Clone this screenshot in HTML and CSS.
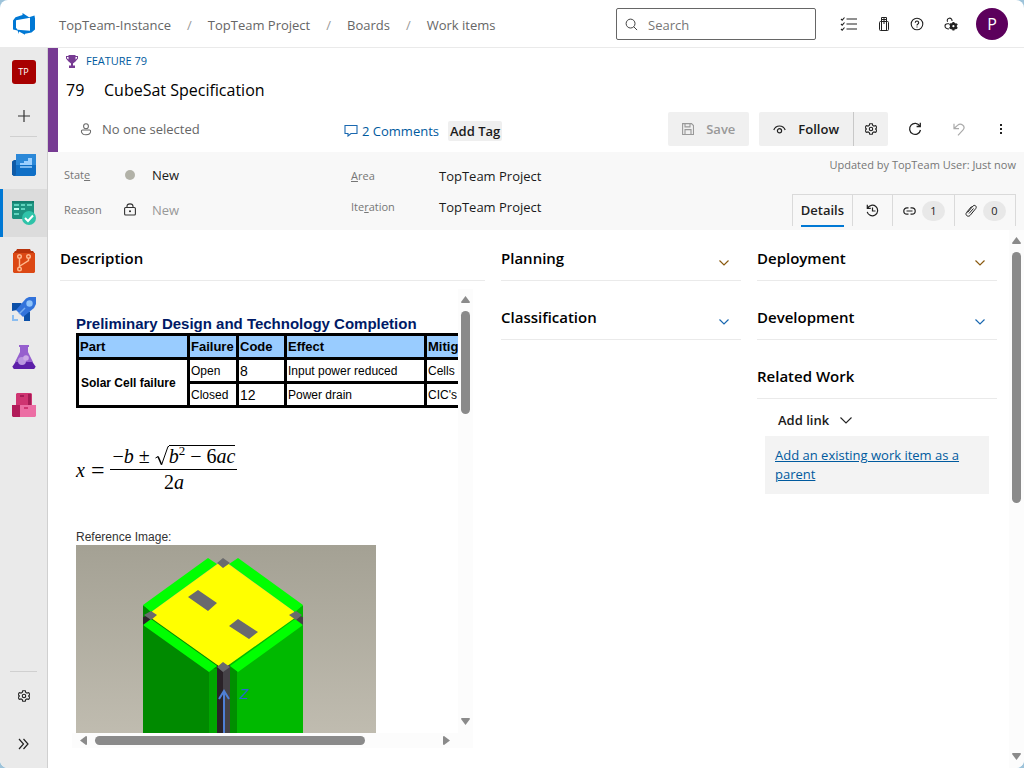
FILE: index.html
```html
<!DOCTYPE html>
<html lang="en">
<head>
  <meta charset="UTF-8">
  <title>Feature 79 CubeSat Specification - Boards</title>
  <link rel="stylesheet" href="styles.css">
</head>
<body>
<div class="window">
  <header class="topbar">
    <a class="logo" href="#" aria-label="Azure DevOps">
      <svg width="24" height="24" viewBox="0 0 24 24"><path fill="#0078d4" fill-rule="evenodd" d="M1 8.500 3.500 5.300 10.500 3V1l6.500 4.200 5.500-1.700.5 3v11l-3.500 3.100L13 21.800v1L7 19.400v2.600L5.500 18.500 1 17.500zM4 8.200v7.500l1.500 2.100 12.500 1V5.800z"/></svg>
    </a>
    <nav class="breadcrumb">
      <a href="#">TopTeam-Instance</a><span>/</span>
      <a href="#">TopTeam Project</a><span>/</span>
      <a href="#">Boards</a><span>/</span>
      <a href="#">Work items</a>
    </nav>
    <label class="search">
      <svg width="13" height="13" viewBox="0 0 14 14" fill="none" stroke="#333"><circle cx="6" cy="6" r="4.800"/><path d="M9.500 9.500 13 13"/></svg>
      <input type="text" placeholder="Search" aria-label="Search">
    </label>
    <div class="top-icons">
      <button aria-label="My work items"><svg width="18" height="16" viewBox="0 0 18 16" fill="none" stroke="#222" stroke-width="1.100"><path d="M6.500 3H17M6.500 8H17M6.500 13H17M1 3l1.200 1.200L4.500 1.500M1 8l1.200 1.200L4.500 6.500M1 13l1.200 1.200 2.300-2.700"/></svg></button>
      <button aria-label="Marketplace"><svg width="12" height="16" viewBox="0 0 12 16" fill="none" stroke="#222"><rect x="1.500" y="5.500" width="9" height="9" rx="1"/><path d="M3.500 14V1.500h5V14M6 1.500V8M3.500 3.500h5"/></svg></button>
      <button aria-label="Help"><svg width="14" height="14" viewBox="0 0 14 14" fill="none" stroke="#222" stroke-width="1.100"><circle cx="7" cy="7" r="5.800"/><path d="M5.300 5.700a1.700 1.700 0 1 1 2.600 1.400Q7 7.600 7 8.400M7 9.500v1.100"/></svg></button>
      <button aria-label="User settings"><svg width="14" height="14" viewBox="0 0 14 14" fill="none" stroke="#222" stroke-width="1.100"><path d="M3.600 4.800a2.400 2.400 0 1 1 4.400-.8M5 12C2.500 12 1 10.800 1 9s1-2.300 2.500-2.300H5"/><circle cx="9.400" cy="9.200" r="2.300" stroke-width="2.400"/><path stroke-width="2" d="M9.400 5v1.500M9.400 12v1.500M5.500 7l1.500.8M11.800 10.500l1.500.9M5.500 11.400l1.500-.8M11.800 7.900l1.500-.9"/></svg></button>
    </div>
    <button class="avatar" aria-label="Account">P</button>
  </header>

  <div class="shell">
    <nav class="sidebar">
      <a class="nav-item" href="#"><span class="project-tile">TP</span></a>
      <a class="nav-item nav-add" href="#" aria-label="Add"><svg width="12" height="12" viewBox="0 0 12 12" stroke="#333" stroke-width="1.200"><path d="M6 0v12M0 6h12"/></svg></a>
      <hr>
      <a class="nav-item" href="#" aria-label="Overview">
        <svg width="24" height="24" viewBox="0 0 24 24"><path fill="#0f5ba7" d="M0 8.500 2 7h3v16H1.500L0 21.500z"/><path fill="#2b88d8" d="M4 1h20v12H4z"/><path fill="#0f6fc6" d="M4 12h20v9.500L22.500 23H2q2-.5 2-2.500z"/><path fill="#9cd0ff" d="M8 10h4V8h4V5h4v7H8z"/><path fill="#7ab8ee" d="M8 13h12v2H8z"/></svg>
      </a>
      <a class="nav-item active" href="#" aria-label="Boards">
        <svg width="24" height="24" viewBox="0 0 24 24"><path fill="#1d9380" d="M0 0h22v18H1L0 17z"/><path fill="#148070" d="M0 0h22v2H0z"/><path fill="#5fd3bd" d="M2 3h5v2H2zM9 3h4v2H9zM15 3h5v2h-5zM9 7h4v2H9zM2 12h5v2H2z"/><path fill="#c5fff3" d="M2 7h5v2H2z"/><circle cx="17" cy="17" r="7" fill="#2fc3a9"/><path fill="none" stroke="#fff" stroke-width="2" d="m13 17 3 3 5-5.500"/></svg>
      </a>
      <a class="nav-item" href="#" aria-label="Repos">
        <svg width="24" height="24" viewBox="0 0 24 24"><path fill="#b8330b" d="M5 0h13l1 2h2l2 3H1l2-3h1z"/><path fill="#dc4814" d="M1 4h22v19l-1 1H2l-1-1z"/><g fill="none" stroke="#ffb98e" stroke-width="1.400"><circle cx="7.500" cy="7.500" r="1.800"/><circle cx="16.500" cy="7.500" r="1.800"/><circle cx="7.500" cy="20" r="1.800"/><path d="M7.500 9.500V18M16.500 9.500v2L8 17"/></g></svg>
      </a>
      <a class="nav-item" href="#" aria-label="Pipelines">
        <svg width="24" height="24" viewBox="0 0 24 24"><path fill="#0b4fa8" d="M0 6h9l9 9v9h-6v-5L5 13 0 14z"/><path fill="#3273db" d="M14 1.500 17 0h7v7l-2 4-11 9-7-7z"/><circle cx="17.500" cy="6.500" r="3.200" fill="#8fc3fa"/><path stroke="#78aef0" stroke-width="1.500" d="m7 17 6-6"/><path fill="#8bbdf0" d="M0 18h2v4h4v2H0z"/></svg>
      </a>
      <a class="nav-item" href="#" aria-label="Test Plans">
        <svg width="24" height="24" viewBox="0 0 24 24"><path fill="#9660ce" d="M7 0h10v2h-1v5l5 10H3L8 7V2H7z"/><path fill="#5c1fa8" d="M3.500 17h17l3 4.500L23 23l-1 1H2l-1-1-.5-1.500z"/><circle cx="10" cy="16" r="4" fill="#b996e0"/><circle cx="14" cy="13" r="2.800" fill="#cba9e6"/></svg>
      </a>
      <a class="nav-item" href="#" aria-label="Artifacts">
        <svg width="24" height="24" viewBox="0 0 24 24"><path fill="#cf3572" d="M4 1l1-1h14l1 1v11H4z"/><path fill="#a31c55" d="M16 1h3v11h-3zM8 2h4v2H8z"/><path fill="#b21c5a" d="M0 12h8v12H1l-1-1z"/><path fill="#ec6ea4" d="M8 12h16v11l-1 1H8z"/><path fill="#cf3572" d="M12 14h4v2h-4z"/></svg>
      </a>
      <div class="spacer"></div>
      <hr class="bottom-rule">
      <a class="nav-item" href="#" aria-label="Project settings"><svg width="12" height="12" viewBox="0 0 14 14" fill="none" stroke="#222" stroke-width="1.300"><path d="M5.500.8h3l.5 2 1.500.8 2-.6 1.300 2.400L12.300 7l1.500 1.600-1.300 2.400-2-.6-1.500.8-.5 2h-3l-.5-2-1.500-.8-2 .6L.2 8.600 1.700 7 .2 5.400 1.500 3l2 .6L5 2.800z"/><circle cx="7" cy="7" r="2"/></svg></a>
      <a class="nav-item" href="#" aria-label="Expand"><svg width="11" height="12" viewBox="0 0 11 12" fill="none" stroke="#222" stroke-width="1.200"><path d="m1 1 4.500 5L1 11M5.500 1 10 6l-4.500 5"/></svg></a>
    </nav>

    <main class="work-item">
      <section class="item-header">
        <a class="item-type" href="#">
          <svg width="12" height="13" viewBox="0 0 12 13"><path fill="#773b93" fill-rule="evenodd" d="M2.500 0h7v1H12v2.500L9.500 6.500 7 8.500v2h2V13H3v-2.500h2v-2L2.500 6.500 0 3.500V1h2.500zM1 2v1.200l1.500 1.400V2zm8.500 0v2.600L11 3.200V2z"/></svg>
          FEATURE 79
        </a>
        <h1><span>79</span>CubeSat Specification</h1>
        <div class="item-actions">
          <button class="assignee">
            <svg width="12" height="13" viewBox="0 0 12 14" fill="none" stroke="#666" stroke-width="1.100"><circle cx="6" cy="3.500" r="2.600"/><path d="M2.300 7.500h7.400q1.300 0 1.300 1.200c0 2.500-2 4-5 4s-5-1.500-5-4q0-1.200 1.300-1.200z"/></svg>
            No one selected
          </button>
          <a class="comments" href="#"><svg width="14" height="13" viewBox="0 0 14 13" fill="none" stroke="#1a68b0" stroke-width="1.100"><path d="M1 1.500h12v8H7L4 12V9.500H1z"/></svg>2 Comments</a>
          <button class="add-tag">Add Tag</button>
          <div class="toolbar">
            <button class="save" disabled><svg width="12" height="12" viewBox="0 0 12 12" fill="none" stroke="#999" stroke-width="1.100"><path d="M.6.600h8.900l2 2v8.900H.6zM3 .6v3.300h5V.6M3 11.500V6.600h6v4.900"/></svg>Save</button>
            <div class="split">
              <button class="follow"><svg width="13" height="9" viewBox="0 0 13 9" fill="none" stroke="#222" stroke-width="1.200"><path d="M.8 5C2 2 4 1 6.500 1S11 2 12.200 5"/><circle cx="6.500" cy="5.800" r="2.100"/></svg>Follow</button>
              <button class="follow-settings" aria-label="Follow settings"><svg width="12" height="12" viewBox="0 0 14 14" fill="none" stroke="#222" stroke-width="1.300"><path d="M5.500.8h3l.5 2 1.500.8 2-.6 1.300 2.400L12.300 7l1.500 1.600-1.300 2.400-2-.6-1.500.8-.5 2h-3l-.5-2-1.500-.8-2 .6L.2 8.600 1.700 7 .2 5.400 1.500 3l2 .6L5 2.800z"/><circle cx="7" cy="7" r="2"/></svg></button>
            </div>
            <button class="plain" aria-label="Refresh"><svg width="14" height="14" viewBox="0 0 14 14" fill="none" stroke="#222" stroke-width="1.300"><path d="M12.500 8A5.500 5.500 0 1 1 11.800 4M12.300.8v3.700H8.600"/></svg></button>
            <button class="plain" aria-label="Undo"><svg width="12" height="13" viewBox="0 0 12 13" fill="none" stroke="#aaa" stroke-width="1.200"><path d="M1 .8v4.900h5M1 5.500 4.500 2.400C8-.5 12.500 3 10.500 6.300L5 12.300"/></svg></button>
            <button class="plain" aria-label="More actions"><svg width="4" height="12" viewBox="0 0 4 12" fill="#222"><path d="M1 1h2v2H1zM1 5h2v2H1zM1 9h2v2H1z"/></svg></button>
          </div>
        </div>
      </section>

      <section class="fields">
        <dl class="field-list">
          <dt>Stat<u>e</u></dt><dd class="icon"><span class="state-dot"></span></dd><dd>New</dd>
          <dt>Reason</dt><dd class="icon"><svg width="12" height="13" viewBox="0 0 12 13" fill="none" stroke="#333" stroke-width="1.100"><rect x=".6" y="4.500" width="10.800" height="7.500" rx="1"/><path d="M3 4.500V3.300C3 0 9 0 9 3.300v1.200"/><circle cx="6" cy="8.200" r=".5"/></svg></dd><dd class="muted">New</dd>
        </dl>
        <dl class="field-list paths">
          <dt><u>A</u>rea</dt><dd>TopTeam Project</dd>
          <dt>Ite<u>r</u>ation</dt><dd>TopTeam Project</dd>
        </dl>
        <div class="fields-right">
          <p>Updated by TopTeam User: Just now</p>
          <div class="tabs">
            <button class="tab selected"><span>Details</span></button>
            <button class="tab" aria-label="History"><svg width="13" height="13" viewBox="0 0 13 13" fill="none" stroke="#222" stroke-width="1.200"><path d="M1.300.8v3.500h3.500M1.500 4.300a5.300 5.300 0 1 1-.3 3.500M6.500 3.500V7h3"/></svg></button>
            <button class="tab" aria-label="Links"><svg width="13" height="8" viewBox="0 0 13 8" fill="none" stroke="#222" stroke-width="1.200"><path d="M5.500.8H4a3.200 3.200 0 0 0 0 6.400h1.500M7.500.8H9a3.200 3.200 0 0 1 0 6.400H7.500M3.500 4h6"/></svg><span class="count">1</span></button>
            <button class="tab" aria-label="Attachments"><svg width="12" height="13" viewBox="0 0 12 13" fill="none" stroke="#222"><path d="M2.500 8.500 8 2c1.500-1.700 4.300.3 2.800 2.500L5 11.500c-2 2-5.300-.5-3.500-3L6.500 2.500M4 9.500l4.500-5"/></svg><span class="count">0</span></button>
          </div>
        </div>
      </section>

      <div class="details">
        <div class="columns">
          <section class="description">
            <h2>Description</h2>
            <div class="editor">
              <div class="doc">
                <h3>Preliminary Design and Technology Completion</h3>
                <table>
                  <colgroup><col class="c-part"><col class="c-failure"><col class="c-code"><col class="c-effect"><col class="c-mitigation"></colgroup>
                  <thead>
                    <tr><th>Part</th><th>Failure</th><th>Code</th><th>Effect</th><th>Mitigation</th></tr>
                  </thead>
                  <tbody>
                    <tr><td class="part" rowspan="2">Solar Cell failure</td><td>Open</td><td class="code">8</td><td>Input power reduced</td><td>Cells</td></tr>
                    <tr><td>Closed</td><td class="code">12</td><td>Power drain</td><td>CIC's</td></tr>
                  </tbody>
                </table>
                <div class="formula">
                  <i>x</i><span class="equals">=</span>
                  <div class="fraction">
                    <div class="numerator">
                      <span>−<i>b</i> ± </span>
                      <svg width="14" height="20" viewBox="0 0 14 20" fill="none" stroke="#000"><path d="M.5 12 3 10.500"/><path stroke-width="1.600" d="m3 10.500 3.500 8"/><path d="m6.500 19 6.500-18.500h1"/></svg>
                      <span class="radicand"><i>b</i><sup>2</sup> − 6<i>ac</i></span>
                    </div>
                    <div class="denominator">2<i>a</i></div>
                  </div>
                </div>
                <p class="caption">Reference Image:</p>
                <svg class="cube" width="300" height="225" viewBox="0 0 300 225">
                  <defs><linearGradient id="backdrop" x2="0" y2="1"><stop stop-color="#a4a194"/><stop offset="1" stop-color="#c5c1b5"/></linearGradient></defs>
                  <path fill="url(#backdrop)" d="M0 0h300v225H0z"/>
                  <path fill="#008a00" d="M67 60l80 55v110H67z"/>
                  <path fill="#00b900" d="M227 60l-80 55v110h80z"/>
                  <path fill="#00a600" d="M133 124h8v101h-8z"/>
                  <path fill="#008f00" d="M154 121h7v104h-7z"/>
                  <path fill="#2a2228" d="M141 120h6v105h-6zM67 72l8-2 3 3-11 8z"/>
                  <path fill="#454247" d="M147 120h7v105h-7zM227 72l-8-2-3 3 11 8z"/>
                  <path fill="#ff0" d="M147 15l76 55-76 54-76-54z"/>
                  <path fill="#0f0" d="M67 60l65-47 9 6-66 48zM227 60l-65-47-9 6 66 48zM67 80l8-6 66 47-8 6zM227 80l-8-6-65 47 8 6z"/>
                  <g fill="#6a6a6d"><path d="M122 45l19 13-9 8-20-14zM162 74l20 13-9 7-20-13z"/><path d="M147 13l7 5-7 5-6-5zM147 117l7 5-7 5-6-5zM75 66l6 4-6 5-7-5zM220 66l6 4-6 5-7-5z"/></g>
                  <path fill="none" stroke="#4f7fd4" stroke-width="2" d="M148 225v-78M143 154l5-8 5 8"/>
                  <text class="axis" x="164" y="154">Z</text>
                </svg>
              </div>
              <div class="scroll-y">
                <svg width="9" height="7" viewBox="0 0 9 7" fill="#8a8a8a"><path d="M4.500 0 9 6l-.5 1h-8L0 6z"/></svg>
                <span class="thumb"></span>
                <svg width="9" height="7" viewBox="0 0 9 7" fill="#8a8a8a"><path d="M4.500 7 9 1 8.500 0h-8L0 1z"/></svg>
              </div>
              <div class="scroll-x">
                <svg width="7" height="9" viewBox="0 0 7 9" fill="#8a8a8a"><path d="M0 4.500 6 0l1 .5v8L6 9z"/></svg>
                <span class="thumb"></span>
                <svg width="7" height="9" viewBox="0 0 7 9" fill="#8a8a8a"><path d="M7 4.500 1 0 0 .5v8L1 9z"/></svg>
              </div>
              <div class="scroll-corner"></div>
            </div>
          </section>

          <section class="groups">
            <h2>Planning <button aria-label="Expand planning"><svg class="warm" width="10" height="6" viewBox="0 0 10 6"><path d="m.5.500 4.500 4.500L9.500.500"/></svg></button></h2>
            <h2>Classification <button aria-label="Expand classification"><svg width="10" height="6" viewBox="0 0 10 6"><path d="m.5.500 4.500 4.500L9.500.500"/></svg></button></h2>
          </section>

          <section class="groups">
            <h2>Deployment <button aria-label="Expand deployment"><svg class="warm" width="10" height="6" viewBox="0 0 10 6"><path d="m.5.500 4.500 4.500L9.500.500"/></svg></button></h2>
            <h2>Development <button aria-label="Expand development"><svg width="10" height="6" viewBox="0 0 10 6"><path d="m.5.500 4.500 4.500L9.500.500"/></svg></button></h2>
            <h2>Related Work</h2>
            <button class="add-link">Add link <svg width="12" height="7" viewBox="0 0 12 7" fill="none" stroke="#222" stroke-width="1.100"><path d="m.5.500 5.500 5.500L11.500.500"/></svg></button>
            <div class="related"><a href="#">Add an existing work item as a parent</a></div>
          </section>
        </div>
        <div class="scroll-y page-scroll">
          <svg width="9" height="7" viewBox="0 0 9 7" fill="#8a8a8a"><path d="M4.500 0 9 6l-.5 1h-8L0 6z"/></svg>
          <span class="thumb"></span>
          <svg width="9" height="7" viewBox="0 0 9 7" fill="#8a8a8a"><path d="M4.500 7 9 1 8.500 0h-8L0 1z"/></svg>
        </div>
      </div>
    </main>
  </div>
</div>
</body>
</html>
```
FILE: styles.css
```css
* {
  box-sizing: border-box;
}
body {
  margin: 0;
  background: #9dc3da;
  color: #1a1a1a;
  font-family: "Open Sans", "Noto Sans", sans-serif;
  font-size: 13px;
  line-height: 20px;
}
h1, h2, h3, p, dl, dd {
  margin: 0;
}
a {
  color: inherit;
  text-decoration: none;
}
button {
  font: inherit;
  color: inherit;
  background: none;
  border: none;
  padding: 0;
  cursor: pointer;
}
svg {
  display: block;
  flex-shrink: 0;
}

/* window frame */
.window {
  height: 100vh;
  display: flex;
  flex-direction: column;
  background: #fff;
  border-radius: 8px;
  overflow: hidden;
}
.shell {
  flex: 1;
  min-height: 0;
  display: flex;
}

/* top bar */
.topbar {
  height: 48px;
  flex-shrink: 0;
  display: flex;
  align-items: center;
  padding: 1px 16px 0 12px;
  border-bottom: 1px solid #eaeaea;
}
.breadcrumb {
  display: flex;
  gap: 16px;
  margin: 2px auto 0 23px;
  color: #666;
  white-space: nowrap;
}
.breadcrumb span {
  color: #999;
}
.search {
  width: 200px;
  height: 32px;
  display: flex;
  align-items: center;
  gap: 10px;
  padding: 0 8px;
  border: 1px solid #666;
  border-radius: 2px;
}
.search input {
  flex: 1;
  min-width: 0;
  border: none;
  outline: none;
  padding: 2px 0 0;
  font: inherit;
  background: none;
}
.search input::placeholder {
  color: #767676;
}
.top-icons {
  display: flex;
  align-items: center;
  gap: 20px;
  margin: 0 18px 0 24px;
}
.avatar {
  width: 32px;
  height: 32px;
  border-radius: 50%;
  background: #5c005c;
  color: #fff;
  font-size: 16px;
}

/* left navigation */
.sidebar {
  width: 48px;
  flex-shrink: 0;
  display: flex;
  flex-direction: column;
  background: #eaeaea;
  border-right: 1px solid #d0d0d0;
}
.sidebar hr {
  width: 27px;
  margin: 0 auto 4px;
  border: none;
  border-top: 1px solid #d0d0d0;
}
.sidebar .bottom-rule {
  margin-bottom: 0;
}
.spacer {
  flex: 1;
}
.nav-item {
  height: 48px;
  display: flex;
  align-items: center;
  justify-content: center;
}
.nav-item.nav-add {
  height: 40px;
}
.nav-item.active {
  background: #dcdcdc;
  box-shadow: inset 3px 0 #0078d4;
}
.project-tile {
  width: 24px;
  height: 24px;
  border-radius: 3px;
  background: #a80000;
  color: #fff;
  font-size: 9px;
  line-height: 24px;
  text-align: center;
}

/* work item header */
.work-item {
  flex: 1;
  min-width: 0;
  display: flex;
  flex-direction: column;
}
.item-header {
  border-left: 10px solid #773b93;
  padding: 3px 8px 6px;
}
.item-type {
  display: flex;
  align-items: center;
  gap: 8px;
  color: #005a9e;
  font-size: 11px;
}
h1 {
  font-size: 16px;
  font-weight: normal;
  line-height: 24px;
  padding: 7px 0 10px;
  color: #000;
}
h1 span {
  display: inline-block;
  width: 38px;
}
.item-actions {
  display: flex;
  align-items: center;
}
.assignee {
  width: 264px;
  display: flex;
  align-items: center;
  gap: 10px;
  margin-left: 14px;
  color: #666;
}
.comments {
  display: flex;
  align-items: center;
  gap: 4px;
  margin-top: 3px;
  color: #005a9e;
}
.add-tag {
  margin: 4px 0 0 9px;
  padding: 0 2px;
  border-radius: 2px;
  background: #efefef;
  font-weight: 600;
}
.toolbar {
  display: flex;
  align-items: center;
  margin-left: auto;
}
.save, .follow {
  display: flex;
  align-items: center;
  height: 34px;
  gap: 12px;
  padding: 0 14px;
  font-weight: 600;
}
.save {
  margin-right: 10px;
  border-radius: 2px;
  background: #f0f0f0;
  color: #999;
}
.split {
  display: flex;
  margin-right: 10px;
  border-radius: 2px;
  background: #f0f0f0;
}
.follow-settings {
  width: 35px;
  display: flex;
  align-items: center;
  justify-content: center;
  border-left: 1px solid #c8c8c8;
}
.plain {
  width: 34px;
  display: flex;
  justify-content: center;
  margin-right: 10px;
}
.plain:last-child {
  width: 30px;
  margin-right: 0;
}

/* state, area and tabs */
.fields {
  height: 78px;
  flex-shrink: 0;
  display: flex;
  padding: 5px 8px 0 16px;
  background: #f8f8f8;
}
.field-list {
  width: 287px;
  display: grid;
  grid-template-columns: 58px 30px 1fr;
  grid-template-rows: 35px 35px;
  align-items: center;
}
.field-list.paths {
  width: auto;
  padding-top: 3px;
  grid-template-columns: 88px auto;
  grid-template-rows: 31px 31px;
}
.field-list dt {
  color: #767676;
  font-size: 11px;
}
.field-list .icon {
  width: 16px;
  display: flex;
  justify-content: center;
}
.state-dot {
  width: 10px;
  height: 10px;
  border-radius: 50%;
  background: #b2b2a8;
}
.field-list .muted {
  color: #999;
}
.fields-right {
  display: flex;
  flex-direction: column;
  align-items: flex-end;
  justify-content: space-between;
  margin-left: auto;
  color: #767676;
  font-size: 11px;
  line-height: 16px;
}
.tabs {
  display: flex;
  height: 32px;
  margin-bottom: 4px;
}
.tab {
  display: flex;
  align-items: center;
  gap: 6px;
  padding: 0 9px 0 10px;
  border: 1px solid #dadada;
  border-bottom: none;
  color: #222;
}
.tab:not(:first-child) {
  border-left: none;
}
.tab:nth-child(2) {
  padding: 0 13px;
}
.tab.selected {
  padding: 0 8px;
  font-size: 13px;
  font-weight: 600;
}
.tab.selected span {
  line-height: 30px;
  border-bottom: 2px solid #0078d4;
}
.count {
  width: 23px;
  border-radius: 10px;
  background: #e8e8e8;
  line-height: 20px;
}

/* details page */
.details {
  flex: 1;
  min-height: 0;
  display: flex;
}
.columns {
  flex: 1;
  min-width: 0;
  display: grid;
  grid-template-columns: minmax(0, 1fr) 240px 240px;
  gap: 16px;
  padding: 0 12px 20px;
}
h2 {
  display: flex;
  align-items: center;
  justify-content: space-between;
  height: 51px;
  margin-bottom: 8px;
  padding: 5px 0 0;
  border-bottom: 1px solid #eaeaea;
  color: #000;
  font-size: 15px;
  font-weight: 600;
}
h2 button {
  padding: 10px 12px 0 0;
}
h2 svg {
  fill: none;
  stroke: #1a68b0;
  stroke-width: 1.2;
}
h2 .warm {
  stroke: #8a5a10;
}
.description {
  display: flex;
  flex-direction: column;
  min-height: 0;
}
.add-link {
  display: flex;
  align-items: center;
  gap: 11px;
  padding: 3px 0 6px 21px;
  font-weight: 600;
}
.related {
  margin: 0 8px;
  padding: 10px;
  background: #f3f3f3;
  color: #005a9e;
  line-height: 19px;
}
.related a {
  text-decoration: underline;
}

/* rich text area with its own scrollbars */
.editor {
  flex: 1;
  min-height: 0;
  display: grid;
  grid-template-columns: minmax(0, 1fr) 15px;
  grid-template-rows: minmax(0, 1fr) 15px;
  margin: 0 12px;
}
.doc {
  overflow: hidden;
  padding: 26px 0 0 4px;
  color: #000;
  font-family: "Liberation Sans", Arial, sans-serif;
  font-size: 12px;
}
h3 {
  color: #001a66;
  font-size: 15px;
  line-height: 18px;
  white-space: nowrap;
}
table {
  width: 520px;
  table-layout: fixed;
  border-collapse: collapse;
}
.c-part {
  width: 111px;
}
.c-failure {
  width: 49px;
}
.c-code {
  width: 48px;
}
.c-effect {
  width: 140px;
}
th, td {
  height: 24px;
  padding: 0 1px;
  border: 3px solid #000;
  line-height: 20px;
  text-align: left;
  white-space: nowrap;
}
th {
  background: #99ccff;
  font-size: 13px;
}
.part {
  padding-left: 2px;
  font-weight: bold;
}
.code {
  font-size: 14px;
}
.formula {
  display: flex;
  align-items: center;
  gap: 6px;
  margin: 37px 0 35px;
  font-family: "Liberation Serif", serif;
  font-size: 20px;
}
.equals {
  font-size: 24px;
}
.fraction {
  text-align: center;
}
.numerator {
  display: flex;
  align-items: flex-end;
  padding: 0 2px 3px;
  border-bottom: 1px solid #000;
  white-space: pre;
}
.radicand {
  border-top: 1px solid #000;
}
.formula sup {
  font-size: 13px;
  line-height: 0;
}
.denominator {
  line-height: 24px;
}
.caption {
  color: #333;
  line-height: 16px;
}
.axis {
  fill: #2a62d8;
  font-size: 14px;
  font-style: italic;
}
.scroll-y, .scroll-x {
  display: flex;
  align-items: center;
  background: #fcfcfc;
}
.scroll-y {
  flex-direction: column;
  width: 15px;
  padding: 7px 0 8px;
}
.scroll-x {
  padding: 0 8px;
}
.scroll-corner {
  background: #fcfcfc;
}
.thumb {
  border-radius: 5px;
  background: #8a8a8a;
}
.scroll-y .thumb {
  width: 9px;
  height: 24%;
  margin: 8px 0 auto;
}
.scroll-x .thumb {
  width: 73%;
  height: 9px;
  margin: 0 auto 0 8px;
}
.page-scroll .thumb {
  height: 48%;
}
```
